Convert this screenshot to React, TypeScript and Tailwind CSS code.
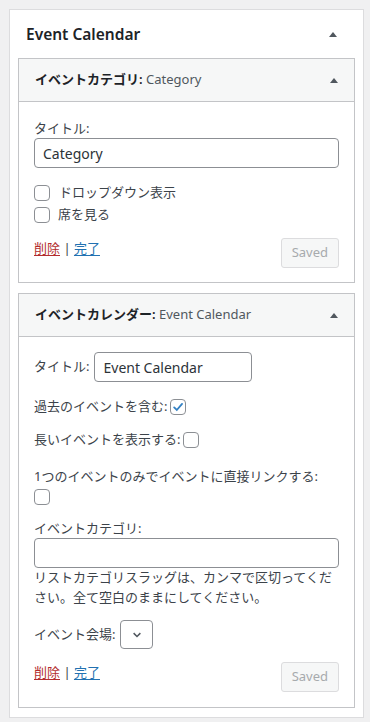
import React from "react";

const font = { fontFamily: '"Noto Sans", "Noto Sans CJK JP", sans-serif' };

// little up triangle used as toggle indicator in headers
const Arrow = () => (
	<span className="inline-block h-0 w-0 border-x-[4px] border-b-[5px] border-x-transparent border-b-[#50575e]" />
);

const Box = ({ checked = false }: { checked?: boolean }) => (
	<span className="flex h-4 w-4 shrink-0 items-center justify-center rounded-[4px] border border-[#8c8f94] bg-white">
		{checked && (
			<svg viewBox="0 0 20 20" className="h-[18px] w-[18px] -mt-[1px]">
				<path d="M4.5 10.5 L8.3 14.3 L15.8 5.5" fill="none" stroke="#3582c4" strokeWidth="2.6" strokeLinecap="round" />
			</svg>
		)}
	</span>
);

const Actions = () => (
	<div className="flex items-start justify-between">
		<div className="pt-[1px] leading-[19px]">
			<a className="text-[#b32d2e] underline underline-offset-2">削除</a>
			<span className="text-[#3c434a]"> | </span>
			<a className="text-[#2271b1] underline underline-offset-2">完了</a>
		</div>
		<button className="h-[30px] rounded-[3px] border border-[#dcdcde] bg-[#f6f7f7] px-[10px] text-[13px] text-[#a7aaad]">
			Saved
		</button>
	</div>
);

const WidgetHead = ({ title, sub }: { title: string; sub: string }) => (
	<div className="flex h-[43px] items-center justify-between border-b border-[#c3c4c7] bg-[#f6f7f7] pl-[16px] pr-[16px]">
		<div className="text-[13px]">
			<span className="font-semibold text-[#1d2327]">{title}</span>
			<span className="text-[#50575e]"> {sub}</span>
		</div>
		<Arrow />
	</div>
);

export default function App() {
	return (
		<div style={font} className="min-h-[722px] bg-[#f0f0f1] pl-[9px] pt-[9px] text-[13px] text-[#3c434a]">
			<div className="w-[355px] border border-[#dcdcde] bg-white px-[8px] pb-[9px]">
				<div className="flex h-[48px] items-center justify-between pl-[8px] pr-[18px]">
					<h2 className="mt-[1px] text-[15.5px] font-semibold text-[#1d2327]">Event Calendar</h2>
					<Arrow />
				</div>

				{/* category widget */}
				<div className="border border-[#c3c4c7]">
					<WidgetHead title="イベントカテゴリ:" sub="Category" />
					<div className="px-[15px] pb-[14px] pt-[17px]">
						<div className="leading-[19px]">タイトル:</div>
						<input
							readOnly
							value="Category"
							className="h-[30px] w-full rounded-[4px] border border-[#8c8f94] px-[8px] text-[14px] text-[#2c3338] outline-none"
						/>
						<div className="mt-[14px]">
							<label className="flex h-[22px] items-center gap-[9px]">
								<Box />
								<span>ドロップダウン表示</span>
							</label>
							<label className="flex h-[22px] items-center gap-[8px]">
								<Box />
								<span>席を見る</span>
							</label>
						</div>
						<div className="mt-[12px]">
							<Actions />
						</div>
					</div>
				</div>

				{/* calendar widget */}
				<div className="mt-[10px] border border-[#c3c4c7]">
					<WidgetHead title="イベントカレンダー:" sub="Event Calendar" />
					<div className="px-[15px] pb-[15px] pt-[15px]">
						<div className="flex items-center gap-[5px]">
							<span>タイトル:</span>
							<input
								readOnly
								value="Event Calendar"
								className="h-[30px] w-[158px] rounded-[4px] border border-[#8c8f94] px-[8px] text-[14px] text-[#2c3338] outline-none"
							/>
						</div>
						<div className="mt-[15px] flex h-[20px] items-center gap-[3px]">
							<span>過去のイベントを含む:</span>
							<Box checked />
						</div>
						<div className="mt-[13px] flex h-[20px] items-center gap-[3px]">
							<span>長いイベントを表示する:</span>
							<Box />
						</div>
						<div className="mt-[16px] leading-[20px]">1つのイベントのみでイベントに直接リンクする:</div>
						<div className="flex h-[22px] items-center">
							<Box />
						</div>
						<div className="mt-[11px] leading-[19px]">イベントカテゴリ:</div>
						<input readOnly className="h-[30px] w-full rounded-[4px] border border-[#8c8f94] px-[8px] outline-none" />
						<p className="leading-[19.5px]">
							リストカテゴリスラッグは、カンマで区切ってください。全て空白のままにしてください。
						</p>
						<div className="mt-[13px] flex items-center gap-[5px]">
							<span>イベント会場:</span>
							<span className="flex h-[29px] w-[33px] items-center justify-center rounded-[4px] border border-[#8c8f94]">
								<svg viewBox="0 0 12 8" className="h-[6px] w-[10px]">
									<path d="M1.5 1.5 L6 6 L10.5 1.5" fill="none" stroke="#50575e" strokeWidth="2" />
								</svg>
							</span>
						</div>
						<div className="mt-[13px]">
							<Actions />
						</div>
					</div>
				</div>
			</div>
		</div>
	);
}
